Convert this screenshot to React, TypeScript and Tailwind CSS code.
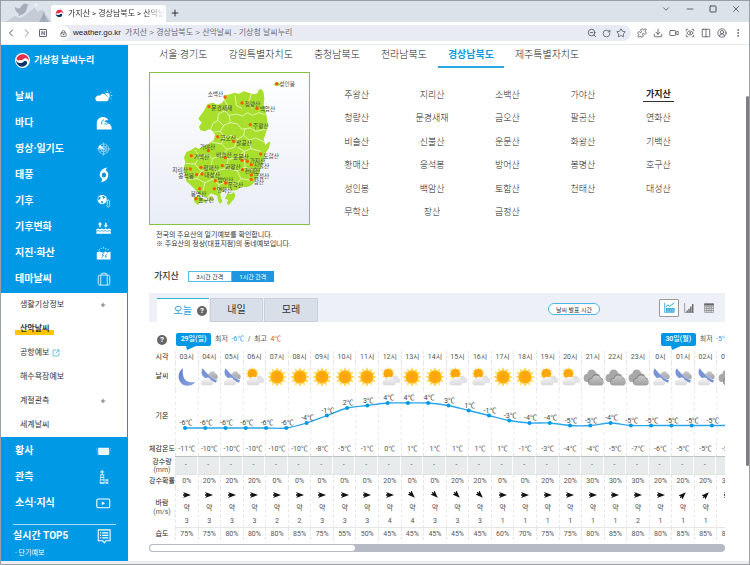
import React from "react";
import {
  ChevronDown,
  ChevronLeft,
  ChevronRight,
  CircleUserRound,
  Columns2,
  Download,
  EllipsisVertical,
  LockKeyhole,
  Minus,
  Plus,
  Puzzle,
  RotateCw,
  ScanEye,
  Square,
  SquareArrowOutUpRight,
  Star,
  Video,
  X,
  ZoomOut,
} from "lucide-react";

const FONT = "font-['Roboto','Noto_Sans_CJK_KR',sans-serif]";

type Sky = "moon" | "moonCloud" | "sun" | "sunCloud" | "cloud";
type Hour = {
  time: string;
  sky: Sky;
  feels: number;
  rain: number;
  wind: "E" | "SE" | "NE";
  speed: number;
  humidity: number;
};

const HOURS: Hour[] = [
  { time: "03시", sky: "moon", feels: -11, rain: 0, wind: "E", speed: 3, humidity: 75 },
  { time: "04시", sky: "moonCloud", feels: -10, rain: 20, wind: "E", speed: 3, humidity: 75 },
  { time: "05시", sky: "moonCloud", feels: -10, rain: 20, wind: "E", speed: 3, humidity: 80 },
  { time: "06시", sky: "sunCloud", feels: -10, rain: 20, wind: "E", speed: 3, humidity: 80 },
  { time: "07시", sky: "sun", feels: -10, rain: 0, wind: "E", speed: 2, humidity: 80 },
  { time: "08시", sky: "sun", feels: -10, rain: 0, wind: "E", speed: 2, humidity: 85 },
  { time: "09시", sky: "sun", feels: -8, rain: 0, wind: "E", speed: 3, humidity: 75 },
  { time: "10시", sky: "sun", feels: -5, rain: 0, wind: "E", speed: 3, humidity: 55 },
  { time: "11시", sky: "sun", feels: -1, rain: 0, wind: "E", speed: 3, humidity: 50 },
  { time: "12시", sky: "sunCloud", feels: 0, rain: 20, wind: "E", speed: 4, humidity: 45 },
  { time: "13시", sky: "sun", feels: 1, rain: 0, wind: "SE", speed: 4, humidity: 45 },
  { time: "14시", sky: "sun", feels: 1, rain: 0, wind: "SE", speed: 3, humidity: 45 },
  { time: "15시", sky: "sunCloud", feels: 1, rain: 20, wind: "SE", speed: 3, humidity: 45 },
  { time: "16시", sky: "sunCloud", feels: 1, rain: 20, wind: "SE", speed: 3, humidity: 45 },
  { time: "17시", sky: "sun", feels: 1, rain: 0, wind: "E", speed: 1, humidity: 60 },
  { time: "18시", sky: "sun", feels: -1, rain: 0, wind: "E", speed: 1, humidity: 70 },
  { time: "19시", sky: "sunCloud", feels: -3, rain: 20, wind: "E", speed: 1, humidity: 75 },
  { time: "20시", sky: "sunCloud", feels: -4, rain: 20, wind: "E", speed: 1, humidity: 75 },
  { time: "21시", sky: "cloud", feels: -4, rain: 30, wind: "E", speed: 1, humidity: 80 },
  { time: "22시", sky: "cloud", feels: -5, rain: 30, wind: "E", speed: 1, humidity: 85 },
  { time: "23시", sky: "cloud", feels: -7, rain: 30, wind: "E", speed: 2, humidity: 80 },
  { time: "0시", sky: "moonCloud", feels: -6, rain: 20, wind: "E", speed: 1, humidity: 80 },
  { time: "01시", sky: "moonCloud", feels: -5, rain: 20, wind: "NE", speed: 1, humidity: 85 },
  { time: "02시", sky: "moonCloud", feels: -5, rain: 20, wind: "NE", speed: 1, humidity: 85 },
  { time: "03시", sky: "cloud", feels: -5, rain: 30, wind: "E", speed: 1, humidity: 85 },
];

const TEMPS = [
  -6, -6, -6, -6, -6, -6, -4, -1, 2, 3, 4, 4, 4, 3, 1, -1, -3, -4, -4, -5, -5, -4, -5, -5, -5, -5, -5, -5,
];

const REGIONS = ["서울·경기도", "강원특별자치도", "충청남북도", "전라남북도", "경상남북도", "제주특별자치도"];

const MOUNTAINS = [
  ["주왕산", "지리산", "소백산", "가야산", "가지산"],
  ["청량산", "문경새재", "금오산", "팔공산", "연화산"],
  ["비슬산", "신불산", "운문산", "화왕산", "기백산"],
  ["황매산", "웅석봉", "방어산", "봉명산", "호구산"],
  ["성인봉", "백암산", "토함산", "천태산", "대성산"],
  ["무학산", "장산", "금정산"],
];

/* ---------- logos and icons ---------- */

function GovLogo({ className }: { className: string }) {
  return (
    <svg viewBox="0 0 32 32" className={className} aria-hidden="true">
      <circle cx="16" cy="16" r="16" fill="#fff" />
      <path d="M3 13C5 5 13 1 20 3c7 2 11 9 9 15-1-5-5-7-9-5-4 2-7 5-11 4-3-1-5-2-6-4z" fill="#e6304b" />
      <path d="M2 15c1 5 7 8 12 5 3-2 6-5 9-3 3 1 4 5 1 8-5 6-14 5-18 0-3-3-4-7-4-10z" fill="#0e3668" />
      <path d="M9 15c4 2 7-1 10-3 5-2 9 0 10 5-3-3-7-2-10 1-4 4-9 4-12-1z" fill="#fff" />
    </svg>
  );
}

type MenuIconName =
  | "weather" | "sea" | "radar" | "typhoon" | "climate" | "change" | "quake" | "theme" | "dust" | "observe" | "news" | "top";

const MENU_ART: Record<MenuIconName, React.ReactNode> = {
  weather: (
    <>
      <path d="M6 34a8 8 0 0 1 0-15c4-2 7 0 8-1 4-7 14-6 17 1 9 1 10 14 0 15z" fill="#fff" />
      <path d="M28 12c6-4 13 0 13 7 0 3-1 5-3 6-1-5-4-7-7-8-1-2-2-4-3-5z" fill="#fff" />
      <path d="M34 4v4M44 9l-3 3M48 18h-4M46 27l-3-2M26 7l2 2" stroke="#fff" strokeWidth="2" />
    </>
  ),
  sea: (
    <>
      <path d="M5 40V22C5 12 12 5 22 5c8 0 13 4 15 10-6-2-10 0-11 4 4-1 7 1 8 5 6-2 10 2 10 8h2v8z" fill="#fff" />
      <path d="M25 13c-6 2-8 8-6 13M26 25c3-2 6-1 7 2" stroke="#0696e0" strokeWidth="2.5" fill="none" />
    </>
  ),
  radar: (
    <>
      <circle cx="24" cy="22" r="14" stroke="#b7e1f8" strokeWidth="2" fill="none" />
      <circle cx="24" cy="22" r="8" stroke="#b7e1f8" strokeWidth="2" fill="none" />
      <path d="M24 3v38M5 22h38M14 12l20 20M34 12L14 32" stroke="#d9effb" strokeWidth="1.5" />
      <path d="M24 22L9 20c1-5 3-8 6-9z" fill="#fff" />
    </>
  ),
  typhoon: (
    <path
      fillRule="evenodd"
      d="M35 1c-4 3-5 6-4 9 6 4 8 12 4 20-4 7-11 11-20 12 4-3 6-6 5-9-7-4-9-12-5-20C19 6 26 2 35 1zM25 15a6 7 0 1 0 0 14 6 7 0 0 0 0-14z"
      fill="#fff"
    />
  ),
  climate: (
    <>
      <circle cx="20" cy="18" r="13" fill="#fff" />
      <path d="M10 12c4-4 7 0 5 3s-4 5-7 3zM20 9c3-2 7 0 8 4l-5 3zM17 23c4-3 7 0 5 5h-4z" fill="#0696e0" />
      <path d="M34 22v10a4 4 0 1 0 6 0V22a3 3 0 0 0-6 0z" fill="#0696e0" stroke="#fff" strokeWidth="2" />
    </>
  ),
  change: (
    <>
      <path d="M14 23V13M30 10v10" stroke="#fff" strokeWidth="4" />
      <path d="M8 15l6-7 6 7zM24 17l6 7 6-7z" fill="#fff" />
      <path d="M4 28l5-2 5 2 5-2 5 2 5-2 5 2 5-2 5 2v13H4z" fill="#fff" />
      <path d="M4 34l5-2 5 2 5-2 5 2 5-2 5 2 5-2 5 2" stroke="#0696e0" strokeWidth="2" fill="none" />
    </>
  ),
  quake: (
    <>
      <path d="M5 40V20l8-2 8 3 8-3 5 3 9-3v22z" fill="#fff" />
      <path d="M26 20l-7 8h5l-6 8M33 25l-5 6h4l-3 5" stroke="#0696e0" strokeWidth="2" fill="none" />
      <path d="M10 15l4-3M16 8l3 3M24 5v5M31 8l-2 4M38 11l-4 3" stroke="#fff" strokeWidth="2" />
    </>
  ),
  theme: (
    <g fill="none" stroke="#e4f4fd" strokeWidth="2.5">
      <rect x="9" y="11" width="32" height="28" rx="5" />
      <path d="M19 11V6h12v5M16 11v28M34 11v28" />
    </g>
  ),
  dust: (
    <>
      <path d="M9 13h30v20H9z" fill="#fff" />
      <path d="M4 14c3 4 1 7 3 10s1 6 2 8M44 14c-3 4-1 7-3 10s-1 6-2 8" stroke="#7cc9f2" strokeWidth="2" fill="none" />
      <path d="M9 18h30M9 23h30M9 28h30" stroke="#b9e2f8" strokeWidth="1.5" />
    </>
  ),
  observe: (
    <>
      <path d="M20 2v14M14 8h12" stroke="#fff" strokeWidth="2.5" />
      <path d="M14 16h12M16 16l-2 24h12l-2-24z" stroke="#d9effb" strokeWidth="2" fill="none" />
      <path d="M15 23h10M14 30h12M14 38h12" stroke="#fff" strokeWidth="2.5" />
      <path d="M29 28h8v13h-8z" fill="#cdeafa" />
      <path d="M29 34h8" stroke="#0696e0" strokeWidth="2" />
    </>
  ),
  news: (
    <>
      <rect x="5" y="11" width="36" height="24" rx="4" fill="none" stroke="#fff" strokeWidth="3" />
      <path d="M19 18l9 5-9 5z" fill="#fff" />
    </>
  ),
  top: (
    <>
      <path d="M9 5h33v30H30l-4 6-5-6H9z" fill="none" stroke="#fff" strokeWidth="3" strokeLinejoin="round" />
      <path d="M14 13h3M14 20h3M14 27h3M20 13h17M20 20h17M20 27h17" stroke="#fff" strokeWidth="3.5" />
    </>
  ),
};

function MenuIcon({ name }: { name: MenuIconName }) {
  return (
    <svg viewBox="0 0 50 44" className="h-4 w-[18px]" aria-hidden="true">
      {MENU_ART[name]}
    </svg>
  );
}

const CLOUD = "M8 20a6 6 0 0 1 1-12 9 9 0 0 1 17-1 7 7 0 0 1 2 13z";

function SkyIcon({ sky }: { sky: Sky }) {
  const rays = Array.from({ length: 12 }, (_, i) => i * 30);
  return (
    <svg viewBox="0 0 54 54" className="h-[18px] w-[18px] overflow-visible" aria-hidden="true">
      <defs>
        <radialGradient id="sunFill">
          <stop offset="0" stopColor="#ff9d14" />
          <stop offset="1" stopColor="#ffb300" />
        </radialGradient>
        <linearGradient id="moonFill" x1="0" y1="0" x2="1" y2="1">
          <stop offset="0" stopColor="#5d7cc9" />
          <stop offset="1" stopColor="#8ea6e2" />
        </linearGradient>
        <linearGradient id="whiteCloud" x1="0" y1="0" x2="0" y2="1">
          <stop offset="0" stopColor="#f8f8f9" />
          <stop offset="1" stopColor="#d8d8dc" />
        </linearGradient>
        <linearGradient id="greyCloud" x1="0" y1="0" x2="0" y2="1">
          <stop offset="0" stopColor="#c9c9c9" />
          <stop offset="1" stopColor="#a0a0a0" />
        </linearGradient>
      </defs>
      {sky === "moon" && <path d="M15 1C-2 12-3 39 15 50c13 7 31 2 37-9-15 4-28 1-34-11-4-9-5-19-3-29z" fill="url(#moonFill)" />}
      {sky === "sun" && (
        <>
          {rays.map((a) => (
            <path key={a} d="M23 6l4-8 4 8z" fill="#ffd338" transform={`rotate(${a} 27 27)`} />
          ))}
          <circle cx="27" cy="27" r="20" fill="url(#sunFill)" />
        </>
      )}
      {sky === "sunCloud" && (
        <>
          {rays.map((a) => (
            <path key={a} d="M19 4l3-7 3 7z" fill="#ffd338" transform={`rotate(${a} 22 17)`} />
          ))}
          <circle cx="22" cy="17" r="14" fill="#ffa60a" />
          <path d={CLOUD} transform="translate(25 21) scale(1.05 1.2)" fill="#e2e2e7" />
          <path d={CLOUD} transform="translate(1 24) scale(1.35 1.4)" fill="url(#whiteCloud)" />
        </>
      )}
      {sky === "moonCloud" && (
        <>
          <path d={CLOUD} transform="translate(17 8) scale(1.15 1.3)" fill="url(#greyCloud)" />
          <path d="M8 1C1 12 5 25 17 31c10 6 22 10 31 13l3-7C38 33 30 26 23 18 17 12 12 7 8 1z" fill="#7893d6" />
          <path d="M24 20c6 7 12 12 20 14l5-4C39 27 32 22 27 16z" fill="#aeb9cf" />
          <path d={CLOUD} transform="translate(0 27) scale(1.25)" fill="url(#whiteCloud)" />
        </>
      )}
      {sky === "cloud" && (
        <>
          <path d={CLOUD} transform="translate(-5 2) scale(1.6 2)" fill="#a8a8a8" />
          <path d={CLOUD} transform="translate(8 15) scale(1.6 1.85)" fill="#8c8c8c" />
          <path d={CLOUD} transform="translate(11 20) scale(1.5 1.6)" fill="url(#greyCloud)" />
        </>
      )}
    </svg>
  );
}

const WIND_ANGLE = { E: 0, SE: 45, NE: -45 };

function WindArrow({ dir }: { dir: Hour["wind"] }) {
  return (
    <svg viewBox="0 0 24 24" className="h-2 w-2" aria-hidden="true">
      <path d="M0 3l24 9-24 9 5-7h-5v-4h5z" fill="#111" transform={`rotate(${WIND_ANGLE[dir]} 12 12)`} />
    </svg>
  );
}

function Help() {
  return (
    <button
      type="button"
      aria-label="도움말"
      className="flex h-[10px] w-[10px] shrink-0 items-center justify-center rounded-full bg-[#666] text-[8px] leading-none font-bold text-white"
    >
      ?
    </button>
  );
}

/* ---------- browser frame ---------- */

function TitleBar() {
  return (
    <header className="flex h-[21px] shrink-0 items-end bg-[#dce2ea] pl-1">
      <svg viewBox="0 0 138 60" className="h-5 w-[46px]" aria-hidden="true">
        <path d="M0 60l30-18 14 6 14-6 30-25 10 12 14-6 26 37z" fill="#c5ccd6" />
        <path d="M102 60l14-26 16 26z" fill="#a7b0bd" />
        <path d="M117 30v30" stroke="#8f99a8" strokeWidth="2" />
        <circle cx="92" cy="9" r="4" fill="#f3f5f8" />
        <circle cx="8" cy="28" r="2" fill="#f3f5f8" />
        <path d="M30 14c5 6 11 6 16 4 2-5 5-8 9-12 4-3 9-2 11 1l5 1-4 4c0 14-9 25-20 27l-6 4 1-7c-8-5-13-14-12-22z" fill="#a6aeb9" />
      </svg>
      <div className="flex h-[17px] w-[115px] items-center gap-1 rounded-t-[3px] bg-white pl-1">
        <GovLogo className="h-[9px] w-[9px] shrink-0" />
        <span className="text-[8px] leading-[12px] whitespace-nowrap text-[#333] [mask-image:linear-gradient(to_right,black_80%,transparent)]">
          가지산 &gt; 경상남북도 &gt; 산악날
        </span>
      </div>
      <button type="button" aria-label="새 탭" className="mb-1 ml-1 text-[#333]">
        <Plus size={10} strokeWidth={2.5} />
      </button>
      <div className="mb-2 ml-auto flex items-center gap-[14px] pr-2 text-[#4d535c]">
        <button type="button" aria-label="탭 목록"><ChevronDown size={10} /></button>
        <button type="button" aria-label="최소화"><Minus size={10} strokeWidth={2} /></button>
        <button type="button" aria-label="최대화"><Square size={8} strokeWidth={3} /></button>
        <button type="button" aria-label="닫기"><X size={10} strokeWidth={2} /></button>
      </div>
    </header>
  );
}

function Toolbar() {
  const tools = [
    { label: "확장앱", Icon: Puzzle },
    { label: "다운로드", Icon: Download },
    { label: "녹화", Icon: Video },
    { label: "캡처", Icon: ScanEye },
    { label: "분할", Icon: Columns2 },
    { label: "프로필", Icon: CircleUserRound },
    { label: "메뉴", Icon: EllipsisVertical },
  ];
  return (
    <div className="flex h-[23px] shrink-0 items-center border-b border-[#e7e9ed] bg-white pr-[6px] pl-1 text-[#50565e]">
      <button type="button" aria-label="뒤로" className="mr-1"><ChevronLeft size={12} /></button>
      <button type="button" aria-label="앞으로" className="mr-[6px] text-[#8a8f97]"><ChevronRight size={12} /></button>
      <button
        type="button"
        aria-label="홈"
        className="mr-[9px] flex h-2 w-2 items-center justify-center rounded-[1px] border border-[#666] text-[6px] leading-none font-bold text-[#666]"
      >
        N
      </button>
      <div className="flex h-4 min-w-0 flex-1 items-center rounded-lg bg-[#e8ebf3]">
        <span className="flex h-[14px] w-[14px] shrink-0 items-center justify-center rounded-full bg-white">
          <LockKeyhole size={7} strokeWidth={2.5} />
        </span>
        <span className="ml-[3px] font-['Liberation_Sans','Noto_Sans_CJK_KR',sans-serif] text-[8px] leading-[12px] text-[#222]">weather.go.kr</span>
        <input
          aria-label="주소"
          className="ml-1 min-w-0 flex-1 bg-transparent font-['Liberation_Sans','Noto_Sans_CJK_KR',sans-serif] text-[8px] leading-[12px] text-[#6a6f76] outline-none"
          defaultValue="가지산 > 경상남북도 > 산악날씨 - 기상청 날씨누리"
        />
        <div className="flex items-center gap-[5px] pr-[5px]">
          <button type="button" aria-label="축소"><ZoomOut size={10} /></button>
          <button type="button" aria-label="새로고침"><RotateCw size={9} /></button>
          <button type="button" aria-label="즐겨찾기"><Star size={10} /></button>
        </div>
      </div>
      <div className="ml-[6px] flex items-center gap-[6px]">
        {tools.map(({ label, Icon }) => (
          <button key={label} type="button" aria-label={label}><Icon size={10} /></button>
        ))}
      </div>
    </div>
  );
}

/* ---------- side menu ---------- */

function MenuRow({ label, icon }: { label: string; icon: MenuIconName }) {
  return (
    <li>
      <a href="#" className="flex h-[26px] items-center justify-between pr-[15px] pl-[14px] text-[10px] leading-[14px] font-bold text-white">
        {label}
        <MenuIcon name={icon} />
      </a>
    </li>
  );
}

function SubRow({ label, plus, external, active }: { label: string; plus?: boolean; external?: boolean; active?: boolean }) {
  return (
    <li className="flex h-6 items-center justify-between pr-[21px] pl-[14px]">
      <a
        href="#"
        className={
          active
            ? "flex items-center bg-linear-to-b from-transparent from-55% to-[#ffc600] to-55% px-[5px] text-[8px] leading-[12px] font-bold text-[#333]"
            : "flex items-center gap-[3px] px-[5px] text-[8px] leading-[12px] text-[#333]"
        }
      >
        {label}
        {external && <SquareArrowOutUpRight size={8} strokeWidth={2} className="text-[#2ba3dd]" />}
      </a>
      {plus && <button type="button" aria-label={`${label} 펼치기`}><Plus size={6} strokeWidth={4} className="text-[#777]" /></button>}
    </li>
  );
}

function Sidebar() {
  return (
    <nav className="flex w-[127px] shrink-0 flex-col bg-[#0099e5]">
      <a href="#" className="mb-[9px] flex h-[30px] items-center gap-1 pl-[14px] text-[9px] leading-[14px] font-bold text-white">
        <GovLogo className="h-[15px] w-[15px]" />
        기상청 날씨누리
      </a>
      <ul>
        <MenuRow label="날씨" icon="weather" />
        <MenuRow label="바다" icon="sea" />
        <MenuRow label="영상·일기도" icon="radar" />
        <MenuRow label="태풍" icon="typhoon" />
        <MenuRow label="기후" icon="climate" />
        <MenuRow label="기후변화" icon="change" />
        <MenuRow label="지진·화산" icon="quake" />
        <MenuRow label="테마날씨" icon="theme" />
      </ul>
      <ul className="mt-px mr-px mb-px bg-white">
        <SubRow label="생활기상정보" plus />
        <SubRow label="산악날씨" active />
        <SubRow label="공항예보" external />
        <SubRow label="해수욕장예보" />
        <SubRow label="계절관측" plus />
        <SubRow label="세계날씨" />
      </ul>
      <ul>
        <MenuRow label="황사" icon="dust" />
        <MenuRow label="관측" icon="observe" />
        <MenuRow label="소식·지식" icon="news" />
      </ul>
      <section className="mx-3 mt-2 border-t border-[#a9dcf7] pt-[3px] text-white">
        <h2 className="flex items-center justify-between pr-[3px] text-[10px] leading-[14px] font-bold">
          실시간 TOP5
          <MenuIcon name="top" />
        </h2>
        <a href="#" className="mt-[2px] block pl-[2px] text-[7px] leading-[14px]">· 단기예보</a>
      </section>
    </nav>
  );
}

/* ---------- map ---------- */

const PINS: [number, number, string, number, number][] = [
  [240, 87, "소백산", 188, 83],
  [395, 47, "성인봉", 403, 55],
  [291, 105, "청량산", 299, 113],
  [336, 121, "백암산", 344, 129],
  [192, 116, "문경새재", 199, 125],
  [316, 170, "주왕산", 324, 180],
  [218, 206, "금오산", 226, 216],
  [266, 220, "팔공산", 273, 231],
  [190, 248, "가야산", 164, 242],
  [139, 263, "기백산", 146, 273],
  [241, 269, "비슬산", 213, 266],
  [291, 277, "운문산", 264, 272],
  [307, 280, "가지산", 314, 285],
  [347, 258, "토함산", 355, 269],
  [319, 290, "신불산", 326, 299],
  [136, 303, "지리산", 82, 312],
  [168, 298, "황매산", 175, 307],
  [232, 293, "화왕산", 240, 302],
  [292, 305, "천태산", 299, 314],
  [155, 320, "웅석봉", 100, 329],
  [171, 318, "대성산", 178, 328],
  [319, 321, "금정산", 326, 331],
  [319, 334, "장산", 326, 347],
  [211, 338, "방어산", 218, 343],
  [242, 345, "무학산", 248, 358],
  [208, 362, "연화산", 215, 371],
  [164, 362, "봉명산", 137, 384],
  [153, 392, "호구산", 160, 402],
];

function RegionMap() {
  return (
    <svg viewBox="15 15 477 453" className="block h-[151px] w-full" role="img" aria-label="경상남북도 주요산 지도">
      <g fill="#a8df2c">
        <path d="M240 82L256 79L268 74L282 77L296 70L312 74L326 79L337 76L341 66L349 62L356 74L358 92L356 108L361 128L366 150L368 172L363 196L356 214L361 232L370 222L376 221L372 240L361 256L357 276L348 296L342 318L330 338L320 352L305 358L290 356L276 366L262 368L252 360L240 362L228 372L226 386L212 382L198 376L186 388L172 384L160 376L148 362L136 350L124 340L120 322L116 300L121 284L117 268L124 252L140 245L150 238L162 243L176 234L190 228L206 216L210 200L202 188L192 184L180 190L166 187L162 176L170 164L160 152L168 140L178 126L188 108L204 104L218 110L232 104L238 94Z" />
        <path d="M248 375L258 379L266 372L271 380L268 392L259 402L252 412L245 406L250 396L240 392ZM216 380L226 384L232 400L226 408L219 398ZM190 386L202 384L204 396L192 402ZM146 388L160 384L174 392L186 396L182 404L168 400L158 410L148 402Z" />
        <ellipse cx="396" cy="49" rx="8" ry="6" />
      </g>
      <g fill="none" stroke="#e9f7c4" strokeWidth="2.5" strokeLinejoin="round">
        <path d="M238 96l10 16-8 16 12 14 22-4 18 6 16-10 14 8 20-8 18 6M240 128l-20 10-2 20-14 8-8 20M252 142l4 22 22 4 12 16 26-4 16 10 30-6M220 158l16 14 20-8M236 172l-10 18 12 16 24-4 16 12 18-12 4-22M205 192l21-2M238 206l-8 22 16 16 22-6 10-24M296 202l16 14 20-6 26 12M278 238l20 12 20-8 30 8M312 216l6 26M200 222l30 6M246 244l-12 16 16 14 26-6 22-18M150 246l14 20-14 22-28-2M164 266l24-6 14 12 32-12M202 272l-4 24 18 12 26-6 8-28M150 288l18 22-12 22-26 2M168 310l30-14M156 332l24 12-6 24M180 344l22-10 14-26M202 334l20 16-4 24M222 350l26-12 26 12 14-18-12-24-34-6M276 308l24-10 28 10M288 332l28 4M298 250l2 48M270 82l4 30 18 10M320 74l-8 26 10 22" />
      </g>
      {PINS.map(([x, y, name, tx, ty]) => (
        <g key={name}>
          <circle cx={x} cy={y} r="5" fill="#ff5a00" />
          <text x={tx} y={ty} fontSize="17" fill="#444">{name}</text>
        </g>
      ))}
    </svg>
  );
}

/* ---------- forecast ---------- */

const ROW = "grid grid-cols-[26px_repeat(25,minmax(0,1fr))]";
const LABEL = "flex items-center justify-center font-normal whitespace-nowrap text-[#222]";
const CELL = "flex items-center justify-center border-l border-dashed border-[#e6e6e6]";

function TempChart() {
  const pts = TEMPS.map((t, i) => ({ t, x: 10 + (i * 608) / 30, y: 23 - t * 2.5 }));
  const line = pts
    .map((p, i) => {
      if (i === 0) return `M${p.x} ${p.y}`;
      const a = pts[i - 1];
      const before = pts[i - 2] ?? a;
      const after = pts[i + 1] ?? p;
      const c1 = [a.x + (p.x - before.x) / 7, a.y + (p.y - before.y) / 7];
      const c2 = [p.x - (after.x - a.x) / 7, p.y - (after.y - a.y) / 7];
      return `C${c1[0]} ${c1[1]} ${c2[0]} ${c2[1]} ${p.x} ${p.y}`;
    })
    .join(" ");
  return (
    <svg viewBox="0 0 564 52" className="block h-[52px] w-full" role="img" aria-label="기온 그래프">
      {HOURS.map((_, i) => (
        <path key={i} d={`M${i * 22.56 + 0.5} 0V52`} stroke="#ebebeb" strokeDasharray="3 3" />
      ))}
      <path d={line} fill="none" stroke="#2ba6ea" strokeWidth="1.3" />
      {pts.map((p, i) => (
        <g key={i}>
          <circle cx={p.x} cy={p.y} r="2" fill="#0098e4" />
          <text x={p.x + 1} y={p.y - 3} textAnchor="middle" fontSize="7" fill="#444">{p.t}℃</text>
        </g>
      ))}
    </svg>
  );
}

function DateBadge({ children }: { children: React.ReactNode }) {
  return (
    <span className="relative flex h-[13px] w-[35px] items-center justify-center rounded-[2px] bg-[#0098e4] text-[7px] leading-[10px] font-medium whitespace-nowrap text-white">
      {children}
      <svg viewBox="0 0 10 4" className="absolute top-full left-[10px] h-1 w-[10px]" aria-hidden="true">
        <path d="M0 0h10L1 4z" fill="#0098e4" />
      </svg>
    </span>
  );
}

function Forecast() {
  return (
    <div className="overflow-hidden">
      <table className="block w-[590px] text-[7px] leading-[9px] text-[#555]">
        <thead className="block">
          <tr className={`${ROW} h-[29px] pt-[10px]`}>
            <td className="flex h-4 items-center justify-center"><Help /></td>
            <td className="col-span-21 flex h-[14px] items-center gap-1 pl-px">
              <DateBadge>29일(일)</DateBadge>
              <span className="whitespace-pre">최저  <b className="font-normal text-[#1a9fe0]">-6℃</b>  /  최고  <b className="font-normal text-[#e0571b]">4℃</b></span>
            </td>
            <td className="col-span-4 flex h-[14px] items-center gap-1 pl-3">
              <DateBadge>30일(월)</DateBadge>
              <span className="whitespace-pre">최저  <b className="font-normal text-[#1a9fe0]">-5℃</b></span>
            </td>
          </tr>
          <tr className={`${ROW} h-3`}>
            <th scope="row" className={LABEL}>시각</th>
            {HOURS.map((h, i) => <th key={i} scope="col" className={`${CELL} font-normal`}>{h.time}</th>)}
          </tr>
        </thead>
        <tbody className="block">
          <tr className={`${ROW} h-[27px]`}>
            <th scope="row" className={LABEL}>날씨</th>
            {HOURS.map((h, i) => <td key={i} className={CELL}><SkyIcon sky={h.sky} /></td>)}
          </tr>
          <tr className={ROW}>
            <th scope="row" className={LABEL}>기온</th>
            <td className="col-span-25"><TempChart /></td>
          </tr>
          <tr className={`${ROW} h-[14px]`}>
            <th scope="row" className={LABEL}>체감온도</th>
            {HOURS.map((h, i) => <td key={i} className={CELL}>{h.feels}℃</td>)}
          </tr>
          <tr className={`${ROW} h-[19px]`}>
            <th scope="row" className={`${LABEL} flex-col leading-[8px]`}><span>강수량</span><span className="text-[#555]">(mm)</span></th>
            {HOURS.map((_, i) => (
              <td key={i} className="flex items-center justify-center border-t border-r border-b border-t-[#bcc4c1] border-r-white border-b-[#dfe3e3] bg-[#e8ebec]">-</td>
            ))}
          </tr>
          <tr className={`${ROW} h-[13px]`}>
            <th scope="row" className={LABEL}>강수확률</th>
            {HOURS.map((h, i) => <td key={i} className={CELL}>{h.rain}%</td>)}
          </tr>
          <tr className={`${ROW} h-10`}>
            <th scope="row" className={`${LABEL} flex-col`}><span>바람</span><span className="text-[#555]">(m/s)</span></th>
            {HOURS.map((h, i) => (
              <td
                key={i}
                className="flex flex-col items-center justify-between border-b border-l border-dashed border-[#e6e6e6] pt-[3px] pb-px [border-bottom-style:solid]"
              >
                <WindArrow dir={h.wind} />
                <span>약</span>
                <span>{h.speed}</span>
              </td>
            ))}
          </tr>
          <tr className={`${ROW} h-3`}>
            <th scope="row" className={LABEL}>습도</th>
            {HOURS.map((h, i) => <td key={i} className={CELL}>{h.humidity}%</td>)}
          </tr>
        </tbody>
      </table>
    </div>
  );
}

function ViewSwitch() {
  return (
    <div className="flex items-center pr-[6px]">
      <button type="button" aria-label="그래프 보기" className="flex h-[18px] w-5 items-center justify-center rounded-[1px] border border-[#999] bg-white">
        <svg viewBox="0 0 34 34" className="h-[11px] w-[11px]" aria-hidden="true">
          <path d="M2 2v30h30" stroke="#2ba3dd" strokeWidth="2.5" fill="none" />
          <path d="M5 15l7-6 6 4 14-10" stroke="#2ba3dd" strokeWidth="3" fill="none" />
          <path d="M6 19h27v11H6z" fill="#2ba3dd" />
          <path d="M10 25h4M18 25h4M26 25h4" stroke="#fff" strokeWidth="3" />
        </svg>
      </button>
      <button type="button" aria-label="막대 보기" className="flex w-5 justify-center">
        <svg viewBox="0 0 32 32" className="h-[10px] w-[10px]" aria-hidden="true">
          <path d="M2 0v31h30" stroke="#888" strokeWidth="2.5" fill="none" />
          <path d="M8 24h4v6H8zM14 18h4v12h-4zM20 11h4v19h-4zM26 3h4v27h-4z" fill="#555" />
        </svg>
      </button>
      <button type="button" aria-label="표 보기" className="flex w-5 justify-center">
        <svg viewBox="0 0 32 32" className="h-[10px] w-[10px]" aria-hidden="true">
          <path d="M2 2h28v28H2zM2 12h28M2 18h28M2 24h28M9 8v22M16 8v22M23 8v22" stroke="#777" strokeWidth="2" fill="none" />
          <path d="M1 2h30v6H1z" fill="#666" />
        </svg>
      </button>
    </div>
  );
}

export default function App() {
  return (
    <div className={`${FONT} flex h-screen flex-col overflow-hidden border border-[#9ba0a8] bg-white text-[#333]`}>
      <TitleBar />
      <Toolbar />
      <div className="flex min-h-0 flex-1">
        <Sidebar />
        <main className="min-w-0 flex-1 pr-[21px] pl-[21px]">
          <nav className="flex gap-px">
            {REGIONS.map((r) => (
              <a
                key={r}
                href="#"
                className={
                  r === "경상남북도"
                    ? "border-b-2 border-[#2aa9e0] px-[10px] pt-[2px] pb-[3px] text-[10px] leading-4 font-bold whitespace-nowrap text-[#0f9be0]"
                    : "border-b-2 border-transparent px-[10px] pt-[2px] pb-[3px] text-[10px] leading-4 font-light whitespace-nowrap text-[#222]"
                }
              >
                {r}
              </a>
            ))}
          </nav>

          <section className="mt-1 flex">
            <div className="shrink-0">
              <div className="w-[161px] border border-[#86c440] bg-linear-to-b from-white to-[#e9edf6]">
                <RegionMap />
              </div>
              <p className="mt-[6px] pl-[7px] text-[7px] leading-[9px] whitespace-nowrap text-[#333]">
                전국의 주요산의 일기예보를 확인합니다.
                <br />※ 주요산의 정상(대표지점)의 동네예보입니다.
              </p>
            </div>
            <ul className="mt-[11px] mr-[29px] ml-[9px] grid h-[141px] flex-1 grid-cols-5 grid-rows-6 self-start text-[9px] leading-[14px] text-[#222]">
              {MOUNTAINS.flat().map((m) => (
                <li key={m} className="flex items-center justify-center">
                  <a
                    href="#"
                    className={m === "가지산" ? "border-b border-[#333] px-[3px] font-bold text-[#222]" : "px-[3px] font-light"}
                  >
                    {m}
                  </a>
                </li>
              ))}
            </ul>
          </section>

          <section className="mt-5">
            <div className="flex items-center gap-[9px] pl-[5px]">
              <h1 className="text-[9px] leading-[14px] font-medium">가지산</h1>
              <div className="flex text-[6px] leading-[9px]">
                <button type="button" className="h-[11px] w-11 border border-[#5bbbe8] bg-white text-[#333]">3시간 간격</button>
                <button type="button" className="h-[11px] w-[42px] border border-[#1e96e0] bg-[#1e96e0] text-white">1시간 간격</button>
              </div>
            </div>

            <div className="mt-[10px] flex h-[29px] items-center bg-[#edf0f6] pl-2">
              <div className="flex gap-px self-end">
                <div className="flex h-6 w-[52px] items-center justify-end gap-[5px] border-t border-[#28b0d2] bg-white pr-[2px]">
                  <button type="button" className="text-[10px] leading-[14px] text-[#1a9fe0]">오늘</button>
                  <Help />
                </div>
                <button type="button" className="h-6 w-[53px] border border-[#c9d0dc] bg-[#d9dfe8] text-[10px] leading-[14px]">내일</button>
                <button type="button" className="h-6 w-[54px] border border-[#c9d0dc] bg-[#d9dfe8] text-[10px] leading-[14px]">모레</button>
              </div>
              <button type="button" className="mt-[3px] mr-[59px] ml-auto h-3 w-[52px] rounded-full border border-[#4db4e6] bg-white text-[6px] leading-[9px]">
                날씨 발표 시간
              </button>
              <ViewSwitch />
            </div>

            <Forecast />

            <div className="mt-1 h-2 rounded-full bg-[#b5bac4]">
              <div className="h-2 w-[36%] rounded-full border border-[#b5bac4] bg-white" />
            </div>
          </section>
        </main>
        <div className="w-[3px] shrink-0 bg-white pt-[51px]">
          <div className="h-[370px] rounded-full bg-[#808080]" />
        </div>
      </div>
      <footer className="h-[3px] shrink-0 bg-[#eceef2]" />
    </div>
  );
}
